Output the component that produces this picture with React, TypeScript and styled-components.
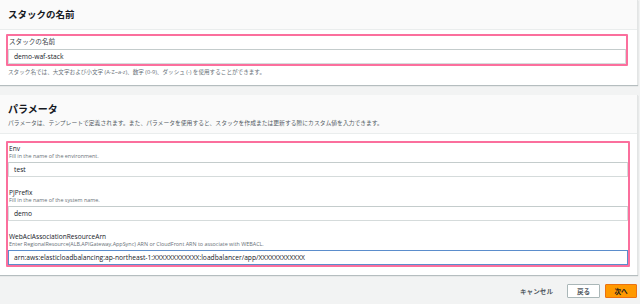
import React from "react";
import styled, { createGlobalStyle } from "styled-components";

const GlobalStyle = createGlobalStyle`
  html, body {
    margin: 0;
    padding: 0;
    background: #f2f3f3;
    font-family: "Open Sans", "Noto Sans CJK JP", sans-serif;
    color: #16191f;
  }
`;

const Page = styled.div`
  width: 640px;
  height: 304px;
  overflow: hidden;
`;

const Panel = styled.section<{ $gap?: number }>`
  width: 637px;
  background: #fff;
  border-right: 1px solid #e3e5e5;
  box-shadow: 0 1px 1px rgba(0, 28, 36, 0.25);
  margin-top: ${props => props.$gap || 0}px;
`;

const PanelHeader = styled.header<{ $height: number }>`
  height: ${props => props.$height}px;
  box-sizing: border-box;
  background: #fafafa;
  border-bottom: 1px solid #eaeded;
  padding: 0 8px;
  display: flex;
  flex-direction: column;
  justify-content: center;
`;

const Title = styled.h2<{ $size: number }>`
  margin: 0;
  font-size: ${props => props.$size}px;
  line-height: 14px;
  font-weight: 700;
  color: #16191f;
`;

const Description = styled.p`
  margin: 3px 0 0;
  font-size: 5.8px;
  line-height: 8px;
  color: #545b64;
`;

const PanelBody = styled.div<{ $pad: string }>`
  padding: ${props => props.$pad};
`;

const Highlight = styled.div<{ $right: number }>`
  border: 2px solid #fb6f9d;
  border-radius: 1px;
  margin-right: ${props => props.$right}px;
  padding-top: 2px;
`;

const Field = styled.div`
  & + & {
    margin-top: 12px;
  }
`;

const Label = styled.div<{ $light?: boolean }>`
  font-size: 6.6px;
  line-height: 8px;
  font-weight: ${props => (props.$light ? 400 : 500)};
  color: ${props => (props.$light ? "#3b4148" : "#16191f")};
  padding-left: 1px;
`;

const Hint = styled.div`
  font-size: 5.4px;
  line-height: 7px;
  color: #687078;
  padding-left: 1px;
`;

const Input = styled.div<{ $focused?: boolean; $top: number }>`
  margin-top: ${props => props.$top}px;
  height: 15px;
  box-sizing: border-box;
  border: 1px solid ${props => (props.$focused ? "#5b8dcc" : "#d5dbdb")};
  border-top-color: ${props => (props.$focused ? "#5b8dcc" : "#c4cccc")};
  background: #fff;
  display: flex;
  align-items: center;
  padding-left: 5px;
  font-size: 6.7px;
  font-weight: 500;
  color: #16191f;
  white-space: nowrap;
`;

const FootHint = styled.div`
  font-size: 5.6px;
  line-height: 10px;
  color: #687078;
  padding: 1px 0 0 2px;
`;

const Footer = styled.footer`
  width: 637px;
  display: flex;
  justify-content: flex-end;
  align-items: center;
  gap: 5px;
  margin-top: 9px;
`;

const TextButton = styled.button`
  border: none;
  background: none;
  font-family: inherit;
  font-size: 6.6px;
  font-weight: 700;
  color: #545b64;
  padding: 0;
  margin-right: 9px;
  height: 14px;
`;

const Button = styled.button<{ $primary?: boolean }>`
  height: 14px;
  width: ${props => (props.$primary ? 32 : 33)}px;
  box-sizing: border-box;
  padding: 0;
  border: 1px solid ${props => (props.$primary ? "#ec7211" : "#aab7b8")};
  background: ${props => (props.$primary ? "#ff9900" : "#fff")};
  border-radius: 1px;
  font-family: inherit;
  font-size: 6.6px;
  font-weight: 700;
  color: ${props => (props.$primary ? "#16191f" : "#545b64")};
`;

const params = [
  { name: "Env", hint: "Fill in the name of the environment.", value: "test" },
  { name: "PJPrefix", hint: "Fill in the name of the system name.", value: "demo" },
  {
    name: "WebAclAssociationResourceArn",
    hint: "Enter RegionalResource(ALB,APIGateway,AppSync) ARN or CloudFront ARN to associate with WEBACL.",
    value: "arn:aws:elasticloadbalancing:ap-northeast-1:XXXXXXXXXXXX:loadbalancer/app/XXXXXXXXXXXX",
    focused: true,
  },
];

const App = () => {
  return (
    <Page>
      <GlobalStyle />
      <Panel>
        <PanelHeader $height={30}>
          <Title $size={9.5}>スタックの名前</Title>
        </PanelHeader>
        <PanelBody $pad="4px 8px 8px 6px">
          <Highlight $right={1}>
            <Label $light>スタックの名前</Label>
            <Input $top={3}>demo-waf-stack</Input>
          </Highlight>
          <FootHint>
            スタック名では、大文字および小文字 (A-Z~a-z)、数字 (0-9)、ダッシュ (-) を使用することができます。
          </FootHint>
        </PanelBody>
      </Panel>
      <Panel $gap={10}>
        <PanelHeader $height={39}>
          <Title $size={10}>パラメータ</Title>
          <Description>
            パラメータは、テンプレートで定義されます。また、パラメータを使用すると、スタックを作成または更新する際にカスタム値を入力できます。
          </Description>
        </PanelHeader>
        <PanelBody $pad="7px 7px 8px 6px">
          <Highlight $right={0}>
            {params.map(p => (
              <Field key={p.name}>
                <Label>{p.name}</Label>
                <Hint>{p.hint}</Hint>
                <Input $top={2} $focused={p.focused}>
                  {p.value}
                </Input>
              </Field>
            ))}
          </Highlight>
        </PanelBody>
      </Panel>
      <Footer>
        <TextButton>キャンセル</TextButton>
        <Button>戻る</Button>
        <Button $primary>次へ</Button>
      </Footer>
    </Page>
  );
};

export default App;
